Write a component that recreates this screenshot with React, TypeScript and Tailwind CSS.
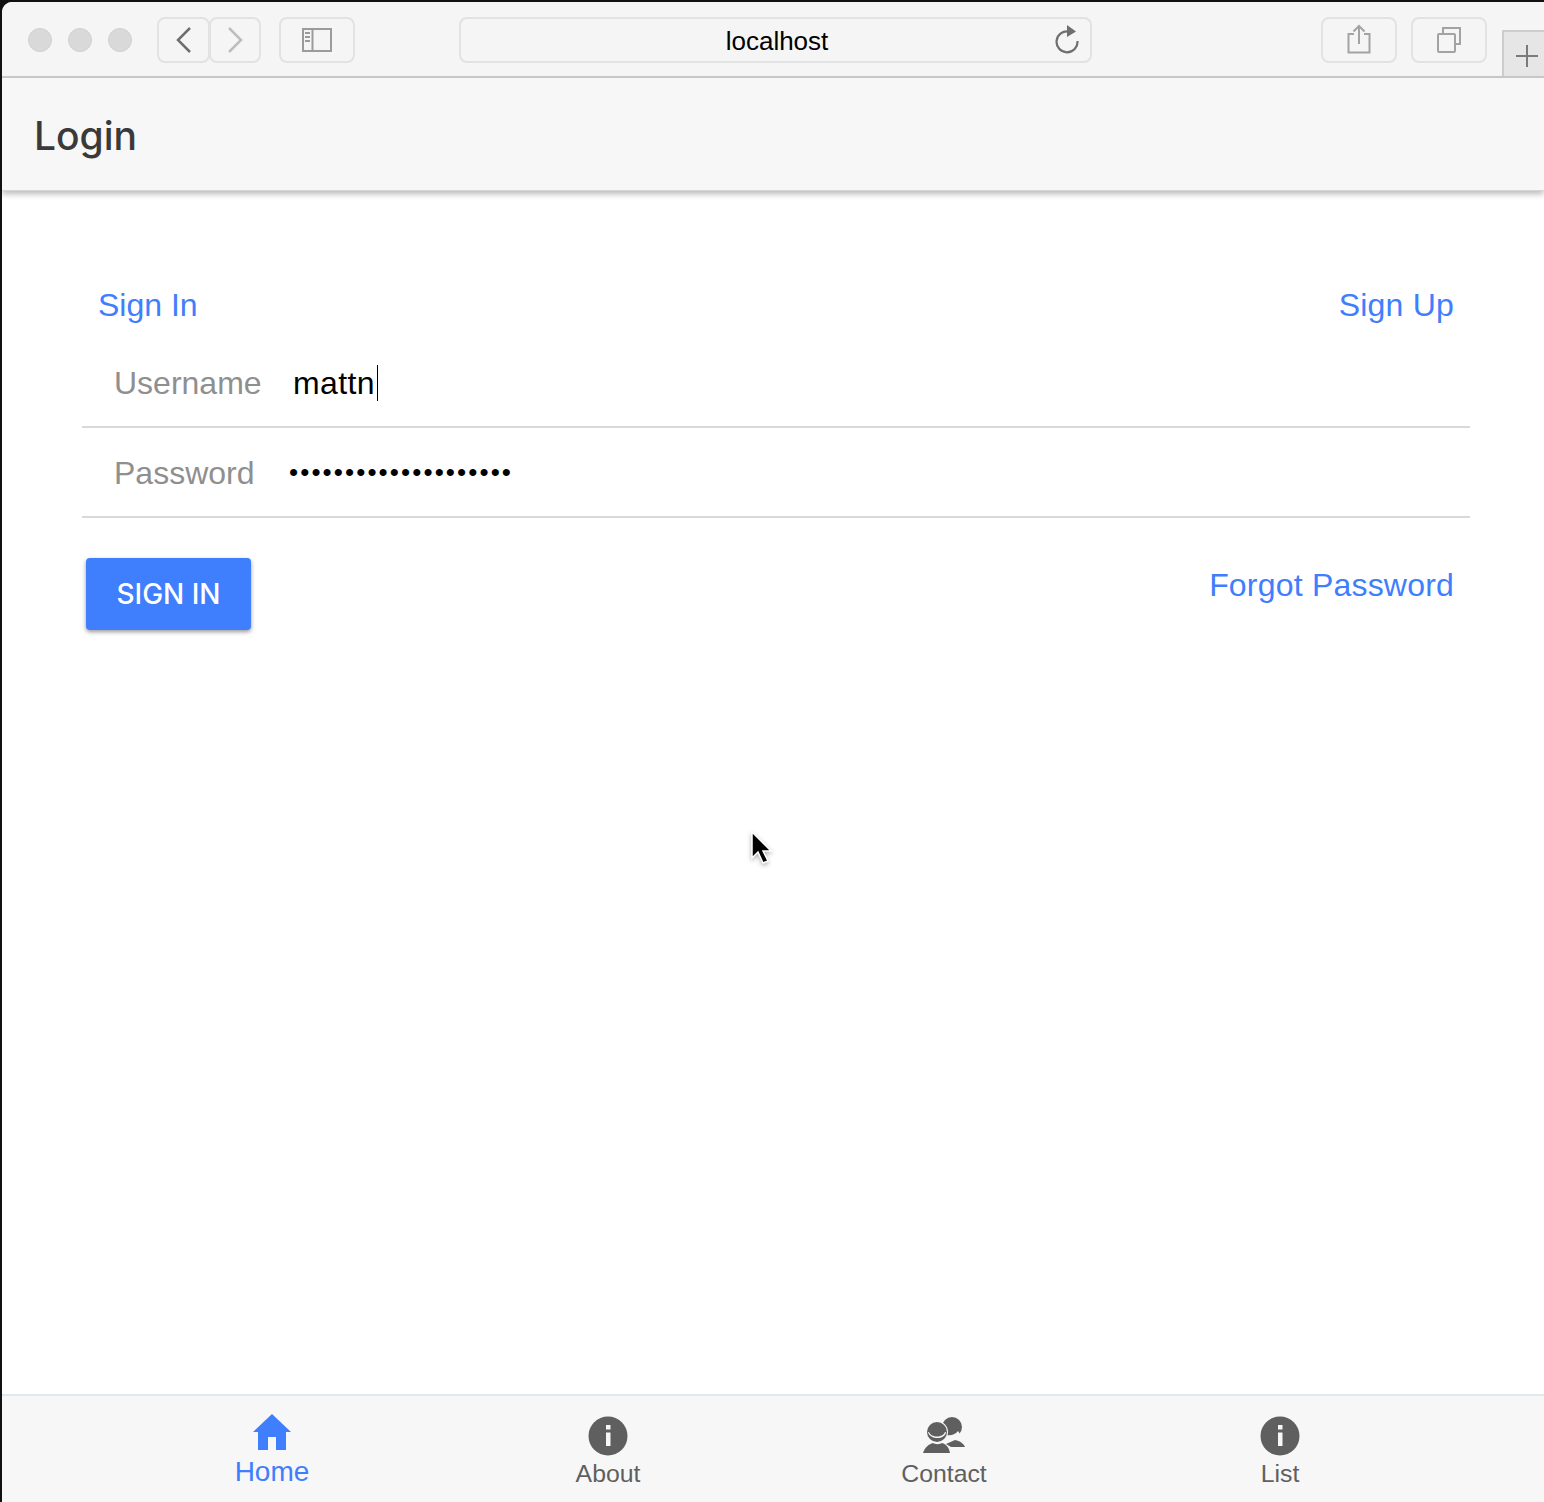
const sans = "font-['Liberation_Sans',Arial,sans-serif]";

function ToolButton({ className, children }: { className: string; children?: React.ReactNode }) {
  return <div className={`h-[46px] flex items-center justify-center rounded-[8px] border-2 border-[#e2e2e2] bg-[#f5f5f5] ${className}`}>{children}</div>;
}

function TrafficLight() {
  return <div className="w-6 h-6 rounded-full bg-[#d9d9d9] border border-[#cfcfcf]" />;
}

function InfoIcon() {
  return (
    <svg width="40" height="40" viewBox="0 0 40 40">
      <circle cx="20" cy="20" r="19.5" fill="#5f5f5f" />
      <rect x="18" y="9" width="4.5" height="4.5" fill="#f7f7f7" />
      <rect x="18" y="16.5" width="4.5" height="13.5" fill="#f7f7f7" />
    </svg>
  );
}

function HomeIcon() {
  return (
    <svg width="38" height="36" viewBox="0 0 38 36">
      <path d="M19 0 L38 18 H33 V36 H23 V23 H15 V36 H5 V18 H0 Z" fill="#3f7efc" />
    </svg>
  );
}

function ContactIcon() {
  return (
    <svg width="44" height="38" viewBox="0 0 44 38">
      <circle cx="30" cy="11" r="10" fill="#5f5f5f" />
      <path d="M22 24 C25 27 35 27 38 18 L36 15 C32 20 26 20 22 18 Z" fill="#f7f7f7" />
      <path d="M24 28 L33 24 C38 25 42 28 43 31 H29 Z" fill="#5f5f5f" />
      <circle cx="15" cy="16" r="11" fill="#f7f7f7" />
      <circle cx="15" cy="16" r="10" fill="#5f5f5f" />
      <path d="M6 16 H7 C9 22 21 22 23 16 H24 C23 24 8 24 6 16 Z" fill="#f7f7f7" />
      <path d="M1 37 C3 31 7 28 11 27 C13 28.500 18 28.500 20 27 C24 28 27 31 28 37 Z" fill="#5f5f5f" />
    </svg>
  );
}

function TabItem({ label, active, icon }: { label: string; active?: boolean; icon: React.ReactNode }) {
  return (
    <div className="flex flex-col items-center">
      <div className={`flex items-start justify-center ${active ? 'h-[36px] mt-[18px]' : 'h-[40px] mt-[20px]'}`}>{icon}</div>
      <span className={active ? 'text-[28px] leading-[36px] mt-[4px] text-[#3f7efc]' : 'text-[24.8px] leading-[30px] mt-[3px] text-[#5f5f5f]'}>{label}</span>
    </div>
  );
}

export default function App() {
  return (
    <div className={`h-[1502px] w-full overflow-hidden bg-[#111111] pt-[2px] pl-[2px] ${sans}`}>
      <div className="relative h-full flex flex-col bg-white rounded-tl-[10px] overflow-hidden">
        {/* Safari toolbar */}
        <div className="h-[76px] shrink-0 flex bg-[#f5f5f5] border-b-2 border-[#cdcdcd]">
          <div className="flex items-center gap-4 pl-[26px] pt-[2px]">
            <TrafficLight />
            <TrafficLight />
            <TrafficLight />
          </div>
          <div className="flex items-center ml-[25px] pt-[2px]">
            <ToolButton className="w-[53px]">
              <svg width="16" height="26" viewBox="0 0 16 26" fill="none" stroke="#6f6f6f" strokeWidth="2.500"><path d="M14 1 L2 13 L14 25" /></svg>
            </ToolButton>
            <ToolButton className="w-[52px] -ml-px">
              <svg width="16" height="26" viewBox="0 0 16 26" fill="none" stroke="#bdbdbd" strokeWidth="2.500"><path d="M2 1 L14 13 L2 25" /></svg>
            </ToolButton>
          </div>
          <div className="flex items-center ml-[18px] pt-[2px]">
            <ToolButton className="w-[76px]">
              <svg width="30" height="24" viewBox="0 0 30 24" fill="none" stroke="#9b9b9b" strokeWidth="2">
                <rect x="1" y="1" width="28" height="22" />
                <path d="M10.500 1 V23" />
                <path d="M3 5 H8 M3 9 H8 M3 13 H8" />
              </svg>
            </ToolButton>
          </div>
          <div className="flex items-center ml-[104px] pt-[2px]">
            <ToolButton className="w-[633px] relative">
              <span className="text-[26px] leading-none text-black pt-[2px] pl-[3px]">localhost</span>
              <svg className="absolute right-[11px] top-[6px]" width="24" height="30" viewBox="0 0 24 30" fill="none">
                <path d="M14 6.500 A10.500 10.500 0 1 0 22.500 16" stroke="#6f6f6f" strokeWidth="2.200" />
                <path d="M12 0 L21 6.500 L12 12 Z" fill="#6f6f6f" />
              </svg>
            </ToolButton>
          </div>
          <div className="flex items-center ml-[229px] pt-[2px]">
            <ToolButton className="w-[76px]">
              <svg className="-mt-[2px]" width="24" height="30" viewBox="0 0 24 30" fill="none" stroke="#a3a3a3" strokeWidth="2">
                <path d="M7 10 H1.500 V28.500 H22.500 V10 H17" />
                <path d="M12 20 V2 M6.500 7.500 L12 2 L17.500 7.500" />
              </svg>
            </ToolButton>
          </div>
          <div className="flex items-center ml-[14px] pt-[2px]">
            <ToolButton className="w-[76px]">
              <svg width="24" height="26" viewBox="0 0 24 26" fill="none" stroke="#a3a3a3" strokeWidth="2">
                <rect x="1" y="7" width="17" height="18" rx="1" />
                <path d="M6 7 V1 H23 V17 H18" />
              </svg>
            </ToolButton>
          </div>
          <div className="ml-[15px] flex-1 self-end h-[46px] flex items-center justify-center pl-[6px] pt-[4px] bg-[#e6e6e6] border-l-2 border-t-2 border-[#cdcdcd]">
            <svg width="24" height="24" viewBox="0 0 24 24" stroke="#7a7a7a" strokeWidth="2"><path d="M12 1 V23 M1 12 H23" /></svg>
          </div>
        </div>

        {/* Header */}
        <div className="relative h-[113px] shrink-0 flex items-center pl-[32px] pt-[3px] bg-[#f7f7f7] shadow-[0_3px_6px_rgba(0,0,0,0.28)] border-b border-[#d6d6d6]">
          <h1 className="font-['Inter',sans-serif] font-medium text-[39px] leading-none text-[#3a3a3a]">Login</h1>
        </div>

        {/* Form */}
        <div className="flex-1 flex flex-col pl-[80px] pr-[74px] pt-[92px]">
          <div className="flex justify-between px-4 text-[32px] leading-[44px] text-[#3f7efc] tracking-[0.2px]">
            <span className="tracking-normal">Sign In</span>
            <span>Sign Up</span>
          </div>
          <div className="h-[90px] flex items-center mt-[11px] pl-8 border-b-2 border-[#d9d9d9] text-[32px] pt-[1px]">
            <span className="w-[179px] text-[#8f8f8f]">Username</span>
            <span className="text-black tracking-[0.4px]">mattn</span>
            <span className="w-px h-9 bg-black ml-[2px]" />
          </div>
          <div className="h-[90px] flex items-center pl-8 border-b-2 border-[#d9d9d9] text-[32px] pt-[1px]">
            <span className="w-[175px] text-[#8f8f8f]">Password</span>
            <span className="text-black text-[26px] tracking-[2.1px]">••••••••••••••••••••</span>
          </div>
          <div className="flex justify-between items-start pl-1 pr-4 pt-[40px]">
            <button className="w-[165px] h-[72px] rounded-[4px] bg-[#3f7efc] text-white text-[28px] font-medium font-['Inter',sans-serif] shadow-[0_2px_4px_rgba(0,0,0,0.4)]">SIGN IN</button>
            <span className="text-[32px] leading-[54px] text-[#3f7efc] tracking-[0.2px]">Forgot Password</span>
          </div>
        </div>

        {/* Tab bar */}
        <div className="h-[108px] shrink-0 grid grid-cols-4 pl-[102px] pr-[96px] bg-[#f7f7f7] border-t-2 border-[#dfe8ec]">
          <TabItem label="Home" active icon={<HomeIcon />} />
          <TabItem label="About" icon={<InfoIcon />} />
          <TabItem label="Contact" icon={<ContactIcon />} />
          <TabItem label="List" icon={<InfoIcon />} />
        </div>

        {/* mouse pointer */}
        <svg className="absolute left-[748px] top-[828px] drop-shadow-[0_2px_2px_rgba(0,0,0,0.3)]" width="24" height="36" viewBox="0 0 24 36">
          <path d="M2 2 L2 28 L8 22 L13 33 L18 31 L13 21 L21 21 Z" fill="#000" stroke="#fff" strokeWidth="1.500" />
        </svg>
      </div>
    </div>
  );
}
